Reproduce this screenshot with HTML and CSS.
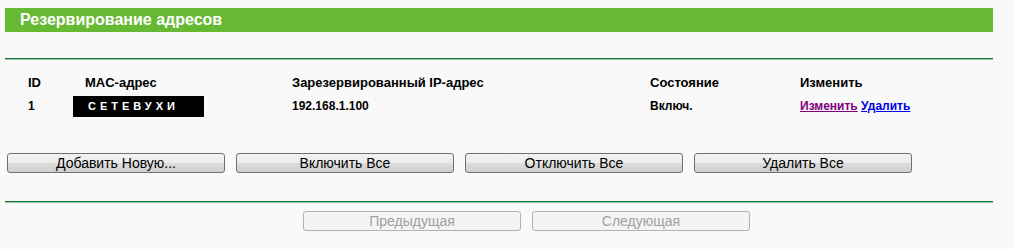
FILE: index.html
```html
<!DOCTYPE html>
<html lang="ru">
<head>
    <meta charset="UTF-8">
    <title>Резервирование адресов</title>
    <link rel="stylesheet" href="styles.css">
</head>
<body>
    <div class="page">
        <div class="title-bar">Резервирование адресов</div>
        <hr class="divider top-divider">

        <!-- Reserved addresses list -->
        <div class="res-table">
            <div class="cell head">ID</div>
            <div class="cell head">MAC-адрес</div>
            <div class="cell head">Зарезервированный IP-адрес</div>
            <div class="cell head">Состояние</div>
            <div class="cell head">Изменить</div>

            <div class="cell">1</div>
            <div class="cell"><span class="mac-mask">СЕТЕВУХИ</span></div>
            <div class="cell">192.168.1.100</div>
            <div class="cell">Включ.</div>
            <div class="cell"><span><a href="#" class="link visited">Изменить</a> <a href="#" class="link">Удалить</a></span></div>
        </div>

        <div class="actions">
            <button class="btn">Добавить Новую...</button>
            <button class="btn">Включить Все</button>
            <button class="btn">Отключить Все</button>
            <button class="btn">Удалить Все</button>
        </div>

        <hr class="divider">

        <div class="pager">
            <button class="btn" disabled>Предыдущая</button>
            <button class="btn" disabled>Следующая</button>
        </div>
    </div>
</body>
</html>
```

FILE: styles.css
```css
body, html {
    margin: 0;
    padding: 0;
    background: #f9f9f9;
    font-family: "Liberation Sans", Arial, sans-serif;
    color: #000;
}

.page {
    width: 988px;
    padding: 8px 0 0 5px;
}

.title-bar {
    height: 24px;
    line-height: 24px;
    background: #67b934;
    color: #fff;
    font-size: 16px;
    font-weight: bold;
    padding-left: 15px;
}

.divider {
    margin: 0;
    border: 0;
    height: 1px;
    background: #0c7a3b;
    box-shadow: 0 1px 0 #9cc9a8;
}

.top-divider {
    margin-top: 26px;
}

.res-table {
    display: grid;
    grid-template-columns: 57px 207px 358px 150px auto;
    grid-auto-rows: 24px;
    padding: 11px 0 0 23px;
    font-size: 12px;
    font-weight: bold;
}

.cell {
    display: flex;
    align-items: center;
}

.cell.head {
    font-size: 13px;
}

.mac-mask {
    display: inline-block;
    margin-left: -12px;
    width: 131px;
    height: 21px;
    line-height: 21px;
    background: #000;
    color: #fff;
    font-size: 11px;
    letter-spacing: 4px;
    padding-left: 15px;
    box-sizing: border-box;
}

.link {
    color: #0000ee;
    text-decoration: underline;
}

.link.visited {
    color: #800080;
}

.actions {
    display: flex;
    gap: 11px;
    padding: 35px 0 0 2px;
    margin-bottom: 28px;
}

.btn {
    width: 218px;
    height: 20px;
    padding: 0;
    border: 1px solid #707070;
    border-radius: 3px;
    background: linear-gradient(#f2f2f2, #ebebeb 50%, #dddddd 51%, #cfcfcf);
    font-family: "Liberation Sans", Arial, sans-serif;
    font-size: 14px;
    color: #000;
}

.btn:disabled {
    border-color: #adb2b5;
    background: #f4f4f4;
    color: #a0a0a0;
}

.pager {
    display: flex;
    gap: 11px;
    padding: 9px 0 0 298px;
}
```
